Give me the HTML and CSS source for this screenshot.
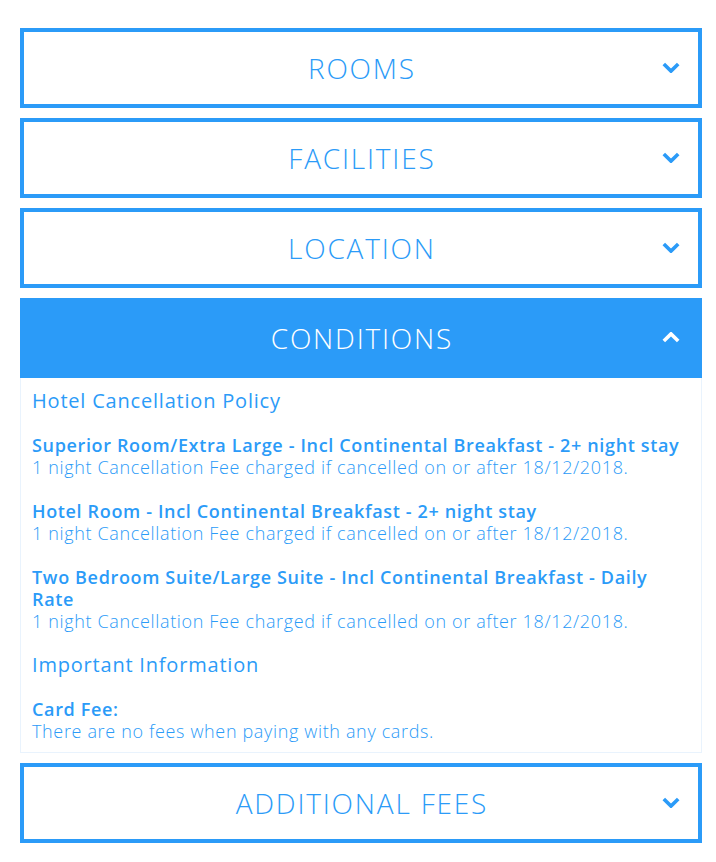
FILE: index.html
```html
<!DOCTYPE html>
<html>
<head>
<meta charset="utf-8">
<link rel="stylesheet" href="styles.css">
</head>
<body>
<div class="accordion">
  <div class="acc-head">
    <span class="acc-title">ROOMS</span>
    <svg class="chev" viewBox="0 0 20 12" width="20" height="12"><path d="M2 2 L10 10 L18 2" fill="none" stroke="currentColor" stroke-width="4"/></svg>
  </div>
  <div class="acc-head">
    <span class="acc-title">FACILITIES</span>
    <svg class="chev" viewBox="0 0 20 12" width="20" height="12"><path d="M2 2 L10 10 L18 2" fill="none" stroke="currentColor" stroke-width="4"/></svg>
  </div>
  <div class="acc-head">
    <span class="acc-title">LOCATION</span>
    <svg class="chev" viewBox="0 0 20 12" width="20" height="12"><path d="M2 2 L10 10 L18 2" fill="none" stroke="currentColor" stroke-width="4"/></svg>
  </div>
  <div class="acc-item">
    <div class="acc-head open">
      <span class="acc-title">CONDITIONS</span>
      <svg class="chev" viewBox="0 0 20 12" width="20" height="12"><path d="M2 10 L10 2 L18 10" fill="none" stroke="currentColor" stroke-width="4"/></svg>
    </div>
    <div class="acc-body">
      <h3 class="sec">Hotel Cancellation Policy</h3>
      <div class="rule">
        <div class="rule-title">Superior Room/Extra Large - Incl Continental Breakfast - 2+ night stay</div>
        <div class="rule-text">1 night Cancellation Fee charged if cancelled on or after 18/12/2018.</div>
      </div>
      <div class="rule">
        <div class="rule-title">Hotel Room - Incl Continental Breakfast - 2+ night stay</div>
        <div class="rule-text">1 night Cancellation Fee charged if cancelled on or after 18/12/2018.</div>
      </div>
      <div class="rule">
        <div class="rule-title">Two Bedroom Suite/Large Suite - Incl Continental Breakfast - Daily Rate</div>
        <div class="rule-text">1 night Cancellation Fee charged if cancelled on or after 18/12/2018.</div>
      </div>
      <h3 class="sec">Important Information</h3>
      <div class="rule">
        <div class="rule-title">Card Fee:</div>
        <div class="rule-text">There are no fees when paying with any cards.</div>
      </div>
    </div>
  </div>
  <div class="acc-head">
    <span class="acc-title">ADDITIONAL FEES</span>
    <svg class="chev" viewBox="0 0 20 12" width="20" height="12"><path d="M2 2 L10 10 L18 2" fill="none" stroke="currentColor" stroke-width="4"/></svg>
  </div>
</div>
</body>
</html>
```
FILE: styles.css
```css
html, body {
  margin: 0;
  padding: 0;
  background: #ffffff;
}
body {
  padding: 28px 14px 0 20px;
  font-family: "Open Sans", "Liberation Sans", sans-serif;
  color: #2b9bf8;
}
.accordion {
  display: flex;
  flex-direction: column;
  gap: 10px;
}
.acc-head {
  box-sizing: border-box;
  height: 80px;
  border: 4px solid #2b9bf8;
  background: #ffffff;
  display: grid;
  grid-template-columns: 1fr auto 1fr;
  align-items: center;
  padding: 0 18px;
}
.acc-head.open {
  background: #2b9bf8;
  color: #ffffff;
}
.acc-title {
  grid-column: 2;
  font-size: 28px;
  font-weight: 300;
  letter-spacing: 1.8px;
  margin-right: -1.8px;
}
.chev {
  grid-column: 3;
  justify-self: end;
  width: 18px;
  height: 11px;
  margin-top: -2px;
}
.acc-body {
  border: 1px solid #e9f3fd;
  border-top: none;
  padding: 12px 11px 10px 11px;
  font-size: 18px;
  line-height: 22px;
  letter-spacing: 0.65px;
}
.sec {
  margin: 0 0 22px;
  font-size: 20px;
  font-weight: 400;
  line-height: 22px;
  letter-spacing: 0.8px;
}
.rule {
  margin-bottom: 22px;
}
.rule:last-child {
  margin-bottom: 0;
}
.rule-title {
  font-weight: 600;
}
.rule-text {
  font-weight: 300;
}
```
